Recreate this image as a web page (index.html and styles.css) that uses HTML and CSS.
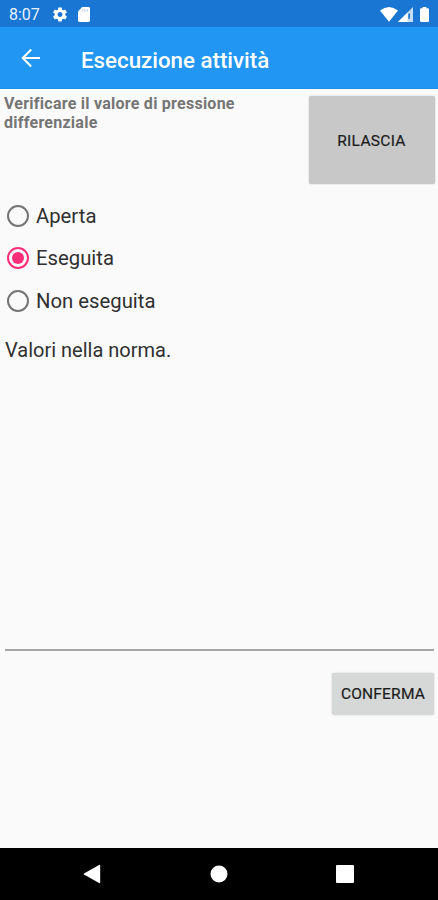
FILE: index.html
```html
<!DOCTYPE html>
<html lang="it">
<head>
<meta charset="utf-8">
<title>Esecuzione attività</title>
<link rel="stylesheet" href="styles.css">
</head>
<body>
<div class="screen">
  <div class="status">
    <span class="clock">8:07</span>
    <svg class="gear" width="14" height="15" viewBox="2 2 20 20"><path fill="#fff" d="M19.43 12.98c.04-.32.07-.64.07-.98s-.03-.66-.07-.98l2.11-1.65c.19-.15.24-.42.12-.64l-2-3.46c-.12-.22-.39-.3-.61-.22l-2.49 1c-.52-.4-1.08-.73-1.69-.98l-.38-2.65C14.46 2.18 14.25 2 14 2h-4c-.25 0-.46.18-.49.42l-.38 2.65c-.61.25-1.17.59-1.69.98l-2.49-1c-.23-.09-.49 0-.61.22l-2 3.46c-.13.22-.07.49.12.64l2.11 1.65c-.04.32-.07.65-.07.98s.03.66.07.98l-2.11 1.65c-.19.15-.24.42-.12.64l2 3.46c.12.22.39.3.61.22l2.49-1c.52.4 1.08.73 1.69.98l.38 2.65c.03.24.24.42.49.42h4c.25 0 .46-.18.49-.42l.38-2.65c.61-.25 1.17-.59 1.69-.98l2.49 1c.23.09.49 0 .61-.22l2-3.46c.12-.22.07-.49-.12-.64l-2.11-1.65zM12 15.5c-1.93 0-3.5-1.57-3.5-3.5s1.57-3.5 3.5-3.5 3.5 1.57 3.5 3.5-1.57 3.5-3.5 3.5z"/></svg>
    <svg class="card" width="12" height="15" viewBox="0 0 12 15"><path fill="#fff" d="M4.2 0H10.6Q12 0 12 1.4V13.6Q12 15 10.6 15H1.4Q0 15 0 13.6V4.4Z"/><path stroke="#1976d2" stroke-width="1.1" d="M4.7 2.2V4.6M7 2.2V4.6M9.3 2.2V4.6" opacity=".3"/></svg>
    <span class="grow"></span>
    <svg class="wifi" width="18" height="15" viewBox="0 0 18 15"><path fill="#fff" d="M0 3.6Q9-3.4 18 3.6L9 14.8Z"/></svg>
    <svg class="cell" width="15" height="15" viewBox="0 0 15 15"><path fill="#fff" fill-opacity=".75" d="M15 0V15H0Z"/><path fill="#fff" d="M9.6 5.4V15H0Z"/><path fill="#1976d2" d="M10.3 6.4h1.7v5.4h-1.7z"/></svg>
    <svg class="battery" width="9" height="15" viewBox="0 0 9 15"><path fill="#fff" d="M2.6 0H6.4V1.3H7.8Q9 1.3 9 2.5V13.8Q9 15 7.8 15H1.2Q0 15 0 13.8V2.5Q0 1.3 1.2 1.3H2.6Z"/></svg>
  </div>
  <header class="appbar">
    <svg class="back" width="20" height="20" viewBox="0 0 20 20"><path fill="none" stroke="#fff" stroke-width="2.1" d="M19 10H2.2M10.2 1.6L1.8 10L10.2 18.4"/></svg>
    <h1 class="title">Esecuzione attività</h1>
  </header>
  <main class="content">
    <div class="task">
      <p class="question">Verificare il valore di pressione differenziale</p>
      <button class="btn release">RILASCIA</button>
    </div>
    <div class="options">
      <div class="option"><span class="radio"></span><span class="label">Aperta</span></div>
      <div class="option"><span class="radio checked"></span><span class="label">Eseguita</span></div>
      <div class="option"><span class="radio"></span><span class="label">Non eseguita</span></div>
    </div>
    <div class="note">Valori nella norma.</div>
    <div class="actions"><button class="btn confirm">CONFERMA</button></div>
  </main>
  <nav class="navbar">
    <svg width="18" height="20" viewBox="0 0 18 20"><path fill="#fff" d="M16 1Q17.2.5 17.2 1.8V18.2Q17.2 19.5 16 19L1 10.6Q0 10 1 9.4Z"/></svg>
    <svg width="18" height="18" viewBox="0 0 18 18"><circle fill="#fff" cx="9" cy="9" r="8.5"/></svg>
    <svg width="18" height="18" viewBox="0 0 18 18"><rect fill="#fff" width="18" height="18" rx="1"/></svg>
  </nav>
</div>
</body>
</html>
```
FILE: styles.css
```css
* { box-sizing: border-box; }
body { margin: 0; font-family: Roboto, sans-serif; background: #fafafa; }
.screen { width: 438px; height: 900px; display: flex; flex-direction: column; background: #fafafa; overflow: hidden; }

.status { height: 27px; flex: none; background: #1976d2; display: flex; align-items: center; padding: 1px 9px 0 9px; }
.clock { color: #e8f2fc; font-size: 16px; line-height: 20px; padding-top: 1px; width: 44px; white-space: nowrap; }
.card { margin-left: 11px; }
.grow { flex: 1; }
.battery { margin-left: 7px; }

.appbar { height: 62px; flex: none; background: #2196f3; display: flex; align-items: center; padding-left: 21px; border-bottom: 1px solid #1e90ea; }
.title { margin: 4px 0 0 40px; font-size: 22.3px; line-height: 28px; font-weight: 500; color: #fff; white-space: nowrap; }

.content { flex: 1; display: flex; flex-direction: column; }
.task { display: flex; justify-content: space-between; padding: 7px 3px 0 4px; height: 96px; }
.question { margin: -2px 0 0; width: 260px; font-size: 16px; line-height: 19px; font-weight: 700; letter-spacing: .25px; color: #757575; }
.btn { border: 0; margin: 0; padding: 0; border-radius: 2px; font-family: inherit; font-size: 15.5px; font-weight: 400; color: #1c1c1c; -webkit-text-stroke: .2px #1c1c1c; box-shadow: 0 0 2px rgba(0, 0, 0, .2); }
.release { width: 126px; height: 88px; padding: 2px 1px 0 0; letter-spacing: .3px; background: #c8c8c8; }

.options { padding: 10px 0 0 7px; }
.option { height: 42.3px; display: flex; align-items: center; gap: 7px; }
.radio { width: 22px; height: 22px; border: 2px solid #757575; border-radius: 50%; display: flex; }
.radio.checked { border-color: #ff2d78; }
.radio.checked::before { content: ""; width: 12px; height: 12px; margin: auto; border-radius: 50%; background: #ff2d78; }
.label { font-size: 20.3px; line-height: 26px; color: #303030; }

.note { margin: 0 4px 0 5px; padding-top: 15px; height: 329px; font-size: 20px; line-height: 26px; color: #303030; border-bottom: 2px solid #a6a6a6; }
.actions { display: flex; justify-content: flex-end; padding: 22px 4px 0 0; }
.confirm { width: 102px; height: 42px; letter-spacing: .2px; background: #d6d8d7; }

.navbar { height: 52px; flex: none; background: #000; display: flex; align-items: center; justify-content: space-between; padding: 0 84px 0 83px; }
```
